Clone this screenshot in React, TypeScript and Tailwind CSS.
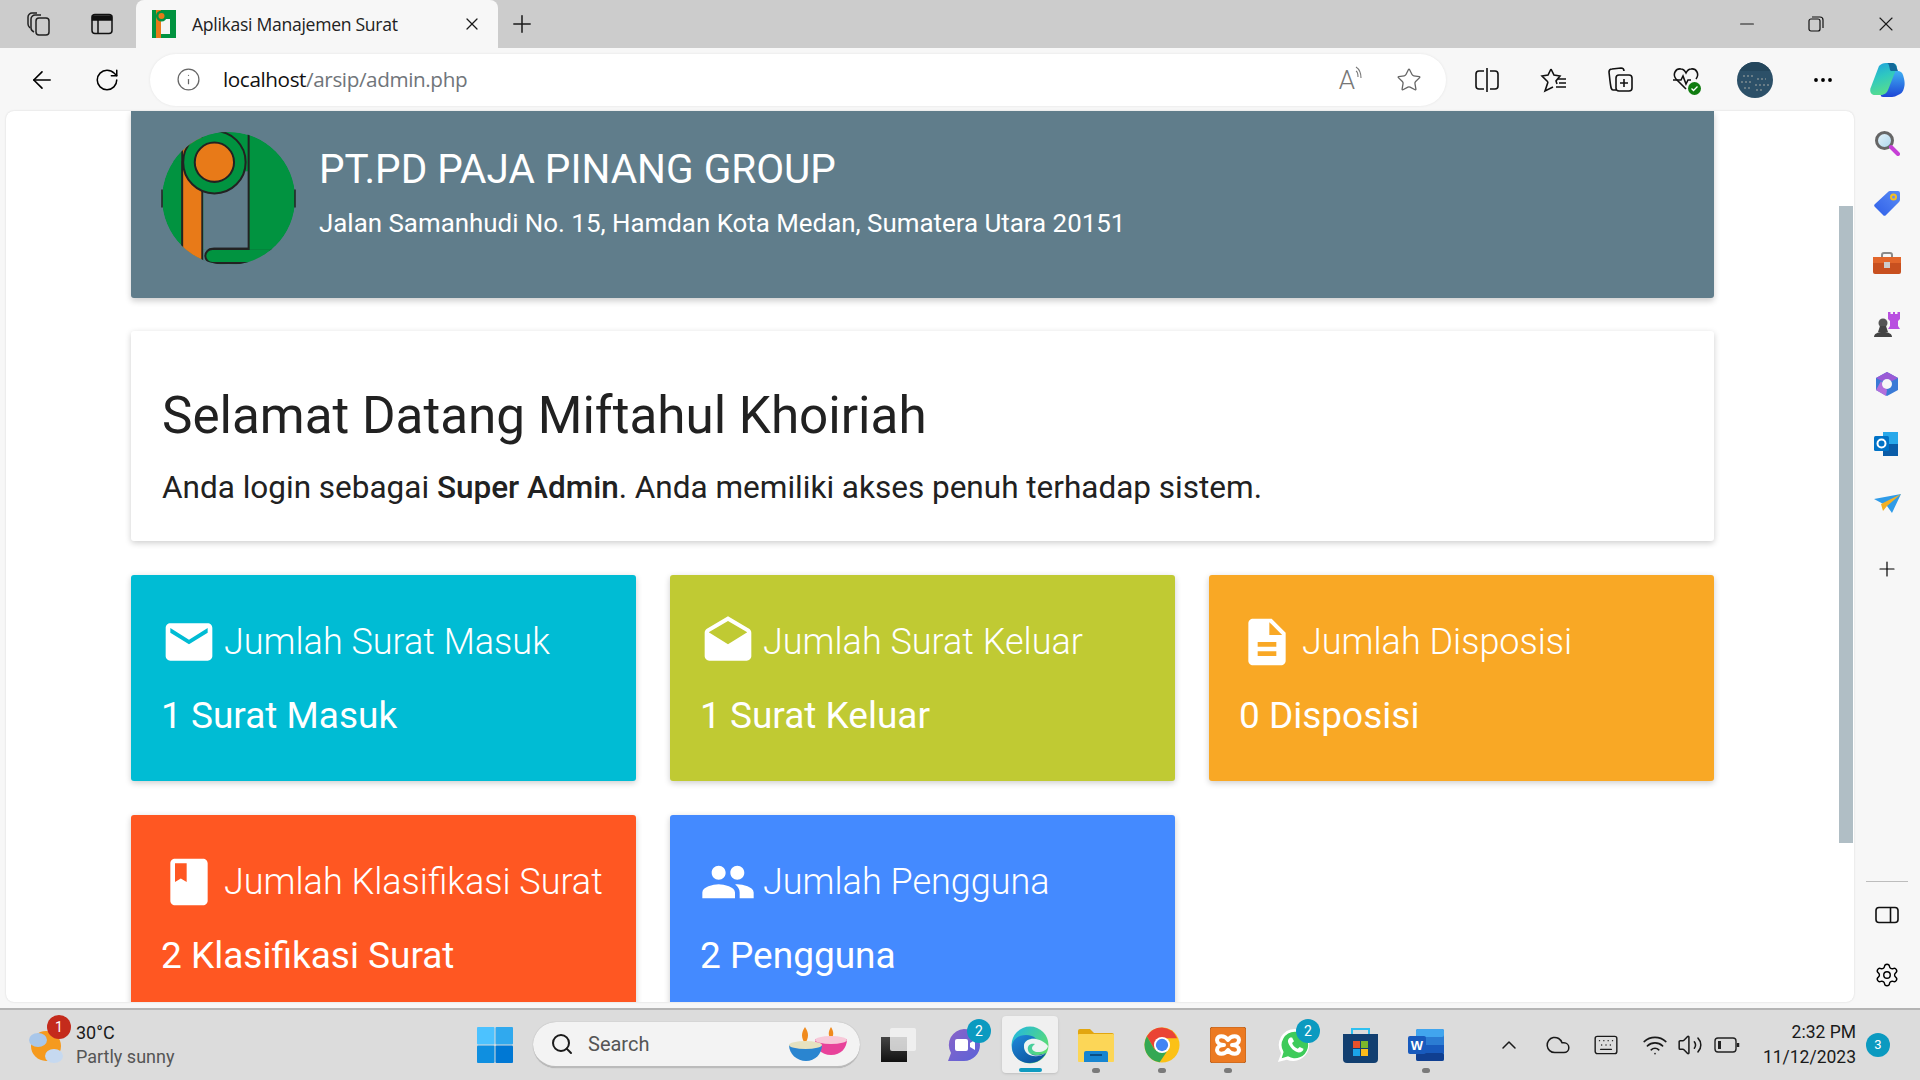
import React from 'react';
import { MdEmail, MdDrafts, MdDescription, MdClass, MdPeople } from 'react-icons/md';
import {
    ArrowLeft, RotateCw, Info, Star, X, Plus, Minus, MoreHorizontal, Settings, Search,
    ChevronUp, Wifi, Volume2, Keyboard, Cloud,
} from 'lucide-react';

const LogoMark = ({ size }: { size: number }) => (
    <svg width={size} height={size} viewBox="0 0 134 134">
        <defs>
            <clipPath id="disc"><circle cx="67" cy="67" r="66" /></clipPath>
        </defs>
        <g clipPath="url(#disc)">
            <circle cx="67" cy="67" r="66" fill="#019340" />
            <rect x="21" y="0" width="20" height="134" fill="#e87a18" stroke="#222" strokeWidth="2" />
            <rect x="0" y="0" width="20" height="30" fill="#019340" />
            <rect x="42" y="40" width="45" height="78" fill="#607d8b" />
            <rect x="42" y="118" width="60" height="16" fill="#607d8b" />
            <rect x="44" y="117" width="70" height="14" rx="7" fill="#019340" stroke="#222" strokeWidth="2" />
            <rect x="87" y="0" width="50" height="118" fill="#019340" />
            <path d="M87 0 V117 H52" fill="none" stroke="#222" strokeWidth="2" />
            <circle cx="53" cy="31" r="31" fill="#019340" stroke="#222" strokeWidth="2" />
            <circle cx="53" cy="31" r="19.500" fill="#e87a18" stroke="#222" strokeWidth="2" />
        </g>
        <path d="M1 58v18M133 58v18" stroke="#222" strokeWidth="1.500" fill="none" />
    </svg>
);

const LogoTab = () => (
    <svg width="24" height="28" viewBox="0 0 24 28">
        <rect width="24" height="28" fill="#019340" />
        <rect x="4" y="0" width="5" height="28" fill="#e87a18" />
        <rect x="9" y="9" width="9" height="15" fill="#f4f4f4" />
        <circle cx="9.500" cy="6" r="5.500" fill="#019340" />
        <circle cx="9.500" cy="6" r="3" fill="#e87a18" />
    </svg>
);

const CopilotLogo = () => (
    <svg width="35" height="34" viewBox="0 0 35 34">
        <defs>
            <linearGradient id="copA" x1="0" y1="0" x2="0.300" y2="1">
                <stop offset="0" stopColor="#1f9fe0" />
                <stop offset="0.500" stopColor="#2fc8c0" />
                <stop offset="1" stopColor="#55dc90" />
            </linearGradient>
            <linearGradient id="copB" x1="0.500" y1="0" x2="0.500" y2="1">
                <stop offset="0" stopColor="#3fb0f2" />
                <stop offset="1" stopColor="#1d45d6" />
            </linearGradient>
        </defs>
        <path d="M21 8h7c2 0 4 1 5 4 2 6 2 10 1 13-1 4-3 6-6 7-2 1-4 2-6 2h-9c-3 0-3-3 0-3 3-1 4-4 5-7z" fill="url(#copB)" />
        <path d="M9 3c2-2 4-3 7-3h6c3 0 4 1 5 4L18 27c-1 3-4 5-8 5H5c-4 0-6-4-4-8z" fill="url(#copA)" />
        <path d="M17 0h5c3 0 4 2 6 8h-7c-2-1-1-7-4-8z" fill="#136a9a" />
    </svg>
);

const EdgeLogo = () => (
    <svg width="38" height="38" viewBox="0 0 38 38">
        <defs>
            <linearGradient id="edgeA" x1="0" y1="0" x2="1" y2="0.700">
                <stop offset="0" stopColor="#1eb4e8" />
                <stop offset="1" stopColor="#5fe06a" />
            </linearGradient>
            <linearGradient id="edgeB" x1="0" y1="0" x2="0.800" y2="1">
                <stop offset="0" stopColor="#1f8bdc" />
                <stop offset="1" stopColor="#0b4f9a" />
            </linearGradient>
        </defs>
        <circle cx="19" cy="19" r="18.500" fill="url(#edgeA)" />
        <path d="M1 21c0-8 7-12 14-12 4 0 8 1 10 4-4-1-11 0-12 6-1 8 9 13 22 8-3 6-9 10-16 10C9 37 1 30 1 21z" fill="url(#edgeB)" />
        <path d="M13 19c1-5 7-7 12-6 5 1 10 4 12 7-1 4-5 6-10 6-4 0-6-2-6-4 0-2 2-3 3-4-5-1-8 2-7 6 1 5 9 8 18 3-8 6-23 4-22-8z" fill="#eef3f3" />
    </svg>
);

const ChromeLogo = () => (
    <svg width="36" height="36" viewBox="0 0 38 38">
        <circle cx="19" cy="19" r="18.500" fill="#fbc116" />
        <path d="M19 .5A18.500 18.500 0 0 0 3 9.700L11 23.500 19 12h16A18.500 18.500 0 0 0 19 .5z" fill="#ea4335" />
        <path d="M3 9.700A18.500 18.500 0 0 0 16.500 37.300L24 26l-13-2.500z" fill="#34a853" />
        <circle cx="19" cy="19" r="8.500" fill="#fff" />
        <circle cx="19" cy="19" r="6.500" fill="#4285f4" />
    </svg>
);

const XamppLogo = () => (
    <svg width="36" height="36" viewBox="0 0 36 36">
        <rect width="36" height="36" rx="3" fill="#ec7a22" stroke="#b9611f" />
        <path d="M18 13c-3-5-11-5-11 0 0 3 3 5 7 5-4 0-7 2-7 5 0 5 8 5 11 0 3 5 11 5 11 0 0-3-3-5-7-5 4 0 7-2 7-5 0-5-8-5-11 0z" fill="none" stroke="#fff" strokeWidth="4" strokeLinejoin="round" />
    </svg>
);

const WhatsappLogo = () => (
    <svg width="36" height="36" viewBox="0 0 38 38">
        <path d="M20 2A17 17 0 0 0 5.500 27.800L2 37l9.500-2.400A17 17 0 1 0 20 2z" fill="#fff" />
        <path d="M20 5A14 14 0 0 0 8 26.300L6 33l6.700-2A14 14 0 1 0 20 5z" fill="#3ecb5a" />
        <path d="M15 11c-2 1-3 3-2 6 2 5 6 9 11 10 3 0 5-2 5-4l-4-2-2 2c-3-1-5-3-6-6l2-2-2-4z" fill="#fff" />
    </svg>
);

const StoreLogo = () => (
    <svg width="35" height="36" viewBox="0 0 35 36">
        <path d="M9 7V2h17v5" fill="none" stroke="#2fc0f0" strokeWidth="2" />
        <path d="M0 7h35v25a4 4 0 0 1-4 4H4a4 4 0 0 1-4-4z" fill="#123f70" />
        <rect x="10" y="14" width="7" height="7" fill="#e8512b" />
        <rect x="18" y="14" width="7" height="7" fill="#7cb72a" />
        <rect x="10" y="22" width="7" height="7" fill="#1ba4e8" />
        <rect x="18" y="22" width="7" height="7" fill="#fbbb1b" />
    </svg>
);

const WordLogo = () => (
    <svg width="36" height="32" viewBox="0 0 36 32">
        <rect x="8" width="28" height="32" rx="2" fill="#2b7cd3" />
        <rect x="8" width="28" height="8" rx="2" fill="#41a5ee" />
        <rect x="8" y="16" width="28" height="8" fill="#185abd" />
        <rect x="8" y="24" width="28" height="8" rx="2" fill="#103f91" />
        <rect y="7" width="18" height="18" rx="2" fill="#185abd" />
        <text x="9" y="21" textAnchor="middle" fontSize="13" fontWeight="700" fill="#fff" fontFamily="Liberation Sans, sans-serif">W</text>
    </svg>
);

const FolderLogo = () => (
    <svg width="36" height="33" viewBox="0 0 36 33">
        <path d="M0 2a2 2 0 0 1 2-2h10l4 4h18a2 2 0 0 1 2 2v6H0z" fill="#e2a60f" />
        <rect y="5" width="36" height="28" rx="1" fill="#fcd657" />
        <path d="M6 33V24a2 2 0 0 1 2-2h20a2 2 0 0 1 2 2v9z" fill="#1785d1" />
        <rect x="12" y="25" width="12" height="2" fill="#0b4f86" />
    </svg>
);

const TeamsLogo = () => (
    <svg width="34" height="34" viewBox="0 0 34 34">
        <defs>
            <linearGradient id="teamsA" x1="0" y1="0" x2="1" y2="1">
                <stop offset="0" stopColor="#8a63c8" />
                <stop offset="1" stopColor="#5b63d8" />
            </linearGradient>
        </defs>
        <path d="M17 1a16 16 0 0 1 0 32H1l3-8A16 16 0 0 1 17 1z" fill="url(#teamsA)" />
        <rect x="8" y="11" width="13" height="12" rx="2" fill="#fff" />
        <path d="M23 15l5-3v10l-5-3z" fill="#fff" />
    </svg>
);

const DiyaLogo = () => (
    <svg width="58" height="34" viewBox="0 0 58 34">
        <path d="M16 0c4 6 4 10 0 17-4-7-4-11 0-17z" fill="#f08a1d" />
        <path d="M42 0c3 5 3 8 0 13-3-5-3-8 0-13z" fill="#f08a1d" />
        <path d="M26 12h32c0 9-6 16-16 16S26 21 26 12z" fill="#e8429a" />
        <ellipse cx="42" cy="13" rx="16" ry="4" fill="#f7c9d9" />
        <path d="M0 18h33c0 9-7 16-16 16S0 27 0 18z" fill="#2a85d0" />
        <ellipse cx="16.500" cy="18" rx="16.500" ry="4" fill="#e6e2c0" />
    </svg>
);

const Badge = ({ value, className }: { value: string; className: string }) => (
    <span className={`absolute flex h-[24px] w-[24px] items-center justify-center rounded-full text-[14px] text-white ${className}`}>{value}</span>
);

const Slot = ({ children, dot, active, badge }: { children: React.ReactNode; dot?: boolean; active?: boolean; badge?: React.ReactNode }) => (
    <div className="relative flex h-[66px] w-[66px] items-center justify-center">
        {active && <span className="absolute left-[5px] top-[4px] h-[57px] w-[56px] rounded bg-[#f0f0f0] shadow-sm" />}
        <span className="relative flex">{children}</span>
        {badge}
        {dot && <span className="absolute bottom-[5px] h-[5px] w-[8px] rounded-full bg-[#7a7a7a]" />}
        {active && <span className="absolute bottom-[6px] h-[4px] w-[23px] rounded-full bg-[#0f9bc0]" />}
    </div>
);

const SideIcon = ({ children }: { children: React.ReactNode }) => (
    <div className="flex h-[60.2px] items-center justify-center">{children}</div>
);

interface StatCard {
    title: string;
    value: string;
    color: string;
    icon: React.ReactNode;
}

const cards: StatCard[] = [
    { title: 'Jumlah Surat Masuk', value: '1 Surat Masuk', color: 'bg-[#00bcd4]', icon: <MdEmail size={56} /> },
    { title: 'Jumlah Surat Keluar', value: '1 Surat Keluar', color: 'bg-[#c0ca33]', icon: <MdDrafts size={56} /> },
    { title: 'Jumlah Disposisi', value: '0 Disposisi', color: 'bg-[#f9a825]', icon: <MdDescription size={56} /> },
    { title: 'Jumlah Klasifikasi Surat', value: '2 Klasifikasi Surat', color: 'bg-[#ff5722]', icon: <MdClass size={56} /> },
    { title: 'Jumlah Pengguna', value: '2 Pengguna', color: 'bg-[#448aff]', icon: <MdPeople size={56} /> },
];

const App = () => {
    return (
        <div className="flex h-[1080px] w-[1920px] flex-col overflow-hidden bg-[#f7f7f7] font-['Roboto',sans-serif]">
            {/* tab strip */}
            <div className="flex h-[48px] shrink-0 items-center bg-[#cccccc] text-[#1a1a1a]">
                <div className="flex w-[136px] items-center pl-[26px]">
                    <svg width="26" height="26" viewBox="0 0 26 26" fill="none" stroke="#222" strokeWidth="1.500">
                        <rect x="10" y="7" width="13" height="17" rx="3" />
                        <path d="M8 21c-2-1-3-2-3-4V8c0-2 2-4 4-4h6" />
                        <path d="M4 17c-1-1-2-2-2-4V6c0-2 2-4 4-4h5" />
                    </svg>
                    <svg className="ml-[38px]" width="24" height="24" viewBox="0 0 24 24" fill="none" stroke="#111" strokeWidth="1.500">
                        <rect x="2" y="2.500" width="20" height="19" rx="3" />
                        <path d="M2.500 4h19v4h-19z" fill="#111" />
                        <path d="M8 8v13" />
                    </svg>
                </div>
                <div className="flex h-[48px] w-[362px] items-center self-end rounded-t-lg bg-[#f7f7f7] pl-[16px] pr-[16px]">
                    <LogoTab />
                    <span className="ml-[16px] flex-1 font-['Open_Sans',sans-serif] text-[17.6px] tracking-[-0.3px] text-[#222]">Aplikasi Manajemen Surat</span>
                    <X size={20} strokeWidth={1.500} />
                </div>
                <Plus className="ml-[10px]" size={28} strokeWidth={1.300} />
                <div className="ml-auto flex items-center gap-[49px] pr-[22px]">
                    <Minus size={22} strokeWidth={1.200} />
                    <svg width="18" height="18" viewBox="0 0 18 18" fill="none" stroke="#111" strokeWidth="1.200">
                        <rect x="2" y="4" width="11" height="12" rx="2" />
                        <path d="M5 2h8a3 3 0 0 1 3 3v8" />
                    </svg>
                    <X size={24} strokeWidth={1.100} />
                </div>
            </div>

            {/* address bar row */}
            <div className="flex h-[63px] shrink-0 items-center bg-[#f7f7f7]">
                <ArrowLeft className="ml-[28px]" size={28} strokeWidth={1.400} />
                <RotateCw className="ml-[38px]" size={26} strokeWidth={1.400} />
                <div className="ml-[30px] flex h-[52px] w-[1296px] items-center rounded-full bg-white pl-[26px] pr-[24px] shadow-[0_0_3px_rgba(0,0,0,0.08)]">
                    <Info size={25} strokeWidth={1.200} color="#666" />
                    <span className="ml-[22px] flex-1 font-['Open_Sans',sans-serif] text-[20.7px] tracking-[-0.4px] text-[#111]">
                        localhost<span className="text-[#70757a]">/arsip/admin.php</span>
                    </span>
                    <span className="flex items-start text-[26px] font-light leading-[30px] text-[#777]">
                        A
                        <svg className="mt-[1px]" width="9" height="14" viewBox="0 0 9 14" fill="none" stroke="#777" strokeWidth="1.100">
                            <path d="M1 1c3 2 5 5 5 11M1 5c2 1 2 3 2 6" />
                        </svg>
                    </span>
                    <Star className="ml-[32px]" size={26} strokeWidth={1.200} color="#666" />
                </div>
                <svg className="ml-[28px]" width="26" height="26" viewBox="0 0 26 26" fill="none" stroke="#111" strokeWidth="1.600">
                    <path d="M13 1v24" />
                    <path d="M10 4H5a3 3 0 0 0-3 3v12a3 3 0 0 0 3 3h5M16 4h5a3 3 0 0 1 3 3v12a3 3 0 0 1-3 3h-5" />
                </svg>
                <svg className="ml-[40px]" width="28" height="28" viewBox="0 0 28 28" fill="none" stroke="#111" strokeWidth="1.600">
                    <path d="M11 3l3 6 6 1-4 5 1 3M8 16l-3 9 8-4" />
                    <path d="M11 3L8 9l-6 1 6 6" />
                    <path d="M18 13h8M19 17h7M16 21h10" />
                </svg>
                <svg className="ml-[39px]" width="27" height="28" viewBox="0 0 27 28" fill="none" stroke="#111" strokeWidth="1.600">
                    <path d="M9 24H6c-2 0-2-2-3-9L2 6c0-2 1-3 3-3l9-1c2 0 3 1 3 3" />
                    <rect x="9" y="9" width="16" height="16" rx="3" />
                    <path d="M17 13v8M13 17h8" />
                </svg>
                <div className="relative ml-[38px] h-[28px] w-[28px]">
                    <svg width="28" height="28" viewBox="0 0 28 28" fill="none" stroke="#111" strokeWidth="1.600">
                        <path d="M14 23L4 13C0 8 4 2 9 3c2 0 4 2 5 4 1-2 3-4 5-4 5-1 9 5 5 10" />
                        <path d="M1 14h8l2-4 3 8 2-4h3" />
                    </svg>
                    <svg className="absolute bottom-[-1px] right-[-1px]" width="13" height="13" viewBox="0 0 13 13">
                        <circle cx="6.500" cy="6.500" r="6.500" fill="#107c10" />
                        <path d="M3.500 6.500l2 2 4-4" fill="none" stroke="#fff" strokeWidth="1.300" />
                    </svg>
                </div>
                <svg className="ml-[37px]" width="36" height="36" viewBox="0 0 36 36">
                    <defs>
                        <clipPath id="avatarClip"><circle cx="18" cy="18" r="18" /></clipPath>
                    </defs>
                    <g clipPath="url(#avatarClip)">
                        <rect width="36" height="36" fill="#2c5068" />
                        <rect width="36" height="9" fill="#24465c" />
                        <path d="M6 14h10M20 17h9M4 20h12M18 23h14M7 26h8M19 28h8" stroke="#7c8a90" strokeWidth="1.500" strokeDasharray="2 2" />
                    </g>
                </svg>
                <MoreHorizontal className="ml-[38px]" size={24} strokeWidth={1.800} />
                <span className="ml-[35px] flex"><CopilotLogo /></span>
            </div>

            {/* page + edge sidebar */}
            <div className="flex min-h-0 flex-1">
                <div className="ml-[6px] flex min-w-0 flex-1 overflow-hidden rounded-lg bg-white shadow-[0_0_2px_rgba(0,0,0,0.15)]">
                    <div className="min-w-0 flex-1 pl-[125px]">
                        <div className="flex h-[187px] w-[1583px] items-start rounded-b-[3px] bg-[#607d8b] pl-[30px] pt-[20px] text-white shadow-[0_3px_6px_rgba(0,0,0,0.2)]">
                            <LogoMark size={135} />
                            <div className="ml-[23px]">
                                <div className="mt-[14px] text-[40.5px] leading-[48px]">PT.PD PAJA PINANG GROUP</div>
                                <div className="mt-[14px] text-[25.9px] leading-[32px]">Jalan Samanhudi No. 15, Hamdan Kota Medan, Sumatera Utara 20151</div>
                            </div>
                        </div>

                        <div className="mt-[33px] h-[210px] w-[1583px] rounded-[3px] bg-white px-[31px] pt-[55px] text-[#212121] shadow-[0_2px_6px_rgba(0,0,0,0.2)]">
                            <div className="text-[51.2px] leading-[60px]">Selamat Datang Miftahul Khoiriah</div>
                            <div className="mt-[21px] text-[31.5px] leading-[42px]">Anda login sebagai <b className="font-medium">Super Admin</b>. Anda memiliki akses penuh terhadap sistem.</div>
                        </div>

                        <div className="mt-[34px] grid w-[1583px] grid-cols-3 gap-[34px]">
                            {cards.map((card) => (
                                <div key={card.title} className={`h-[206px] rounded-[3px] px-[30px] pt-[39px] text-white shadow-[0_2px_6px_rgba(0,0,0,0.2)] ${card.color}`}>
                                    <div className="flex h-[56px] items-center">
                                        <span className="flex w-[63px] shrink-0 justify-start">{card.icon}</span>
                                        <span className="text-[36px] font-light leading-[44px]">{card.title}</span>
                                    </div>
                                    <div className="mt-[24px] text-[37px] leading-[44px]">{card.value}</div>
                                </div>
                            ))}
                        </div>
                    </div>
                    <div className="w-[15px] shrink-0 pt-[95px]">
                        <div className="h-[637px] w-[14px] bg-[#b0bec5]" />
                    </div>
                </div>

                <div className="flex w-[66px] shrink-0 flex-col items-center pt-[2px]">
                    <SideIcon>
                        <svg width="26" height="26" viewBox="0 0 26 26">
                            <defs>
                                <linearGradient id="lens" x1="0" y1="0" x2="1" y2="1">
                                    <stop offset="0" stopColor="#e8f4fa" />
                                    <stop offset="1" stopColor="#a8d4ec" />
                                </linearGradient>
                            </defs>
                            <circle cx="10.500" cy="10.500" r="8" fill="url(#lens)" stroke="#666" strokeWidth="3" />
                            <path d="M17 17l7 7" stroke="#c63fd6" strokeWidth="4" strokeLinecap="round" />
                        </svg>
                    </SideIcon>
                    <SideIcon>
                        <svg width="26" height="26" viewBox="0 0 26 26">
                            <defs>
                                <linearGradient id="tag" x1="0" y1="1" x2="1" y2="0">
                                    <stop offset="0" stopColor="#2f5fe8" />
                                    <stop offset="1" stopColor="#5a8cf5" />
                                </linearGradient>
                            </defs>
                            <path d="M1 14L14 2a3 3 0 0 1 2-1h8a2 2 0 0 1 2 2v7a3 3 0 0 1-1 2L12 25a2 2 0 0 1-3 0L1 17a2 2 0 0 1 0-3z" fill="url(#tag)" />
                            <circle cx="19.500" cy="7" r="2.500" fill="#6f8cf0" stroke="#f4c020" strokeWidth="2" />
                        </svg>
                    </SideIcon>
                    <SideIcon>
                        <svg width="28" height="22" viewBox="0 0 28 22">
                            <path d="M9 6V3a2 2 0 0 1 2-2h6a2 2 0 0 1 2 2v3" fill="none" stroke="#8a8a8a" strokeWidth="2" />
                            <rect y="5" width="28" height="17" rx="2" fill="#c8501f" />
                            <rect y="5" width="28" height="6" fill="#e2662b" />
                            <rect x="11" y="10" width="6" height="6" fill="#ccc" />
                        </svg>
                    </SideIcon>
                    <SideIcon>
                        <svg width="28" height="28" viewBox="0 0 28 28">
                            <circle cx="10" cy="13" r="4.500" fill="#555" />
                            <path d="M7 16h6l2 6H5zM1 27c0-3 3-5 9-5s9 2 9 5z" fill="#444" />
                            <path d="M15 2h2.500v2h2.500V2h2v2h2.500V2H27v7l-2 2v5l2 3H15l2-3v-5l-2-2z" fill="#b84fe0" />
                        </svg>
                    </SideIcon>
                    <SideIcon>
                        <svg width="26" height="26" viewBox="0 0 26 26">
                            <path d="M13 1l11 6v12l-11 6-11-6V7z" fill="#3a7ad6" />
                            <path d="M2 7l11-6 11 6-6 3-5-2-5 2z" fill="#9a5bd6" />
                            <path d="M2 19l5-9 6 9-1 6z" fill="#b26fdc" />
                            <circle cx="13" cy="13" r="5" fill="#f7f7f7" />
                        </svg>
                    </SideIcon>
                    <SideIcon>
                        <svg width="26" height="26" viewBox="0 0 26 26">
                            <path d="M9 1h15v24H9z" fill="#28a8ea" />
                            <path d="M9 13h15v12H9z" fill="#0a5ca8" />
                            <rect y="5" width="15" height="15" rx="1.500" fill="#0072c6" />
                            <circle cx="7.500" cy="12.500" r="4" fill="none" stroke="#fff" strokeWidth="2" />
                        </svg>
                    </SideIcon>
                    <SideIcon>
                        <svg width="28" height="22" viewBox="0 0 28 22">
                            <path d="M1 6l27-5-9 19-5-7z" fill="#2f9be8" />
                            <path d="M28 1L8 11l2 7 4-5z" fill="#f4b023" />
                        </svg>
                    </SideIcon>
                    <div className="mt-[5px]">
                        <SideIcon><Plus size={24} strokeWidth={1.200} /></SideIcon>
                    </div>
                    <div className="mt-auto w-[42px] border-t border-[#bdbdbd]" />
                    <div className="flex h-[66px] items-center justify-center">
                        <svg width="24" height="18" viewBox="0 0 24 18" fill="none" stroke="#111" strokeWidth="1.600">
                            <rect x="1" y="1.500" width="22" height="15" rx="3" />
                            <path d="M15.500 1.500v15" />
                        </svg>
                    </div>
                    <div className="flex h-[54px] items-center justify-center"><Settings size={26} strokeWidth={1.300} /></div>
                </div>
            </div>

            {/* windows taskbar */}
            <div className="mt-[6px] flex h-[72px] shrink-0 items-center border-t-[2px] border-[#b4b4b4] bg-[#dcdcdc] text-[#1a1a1a]">
                <div className="relative ml-[28px] flex w-[449px] items-center">
                    <svg width="36" height="42" viewBox="0 0 36 42">
                        <circle cx="18" cy="22" r="15" fill="#f59a1e" />
                        <ellipse cx="10" cy="16" rx="9" ry="7" fill="#a9c7ea" />
                        <ellipse cx="26" cy="32" rx="9" ry="7" fill="#c6d9f0" />
                    </svg>
                    <Badge value="1" className="left-[19px] top-[-6px] bg-[#c42b1c]" />
                    <div className="ml-[12px] text-[18px] leading-[24px]">
                        <div>30°C</div>
                        <div className="text-[#555]">Partly sunny</div>
                    </div>
                </div>
                <svg width="36" height="36" viewBox="0 0 36 36">
                    <rect width="17.500" height="17.500" rx="1" fill="#4cc2ff" />
                    <rect x="18.500" width="17.500" height="17.500" rx="1" fill="#30a9ee" />
                    <rect y="18.500" width="17.500" height="17.500" rx="1" fill="#0f8fe0" />
                    <rect x="18.500" y="18.500" width="17.500" height="17.500" rx="1" fill="#0078d4" />
                </svg>
                <div className="ml-[20px] flex h-[46px] w-[327px] items-center rounded-full border-b-2 border-[#bbbbbb] bg-[#f3f3f3] pl-[17px] pr-[13px] shadow-[0_0_1px_rgba(0,0,0,0.3)]">
                    <Search size={24} strokeWidth={2} />
                    <span className="ml-[14px] flex-1 text-[20px] text-[#555]">Search</span>
                    <DiyaLogo />
                </div>
                <div className="ml-[5px] flex items-center">
                    <Slot>
                        <div className="relative h-[34px] w-[35px]">
                            <div className="absolute bottom-0 left-0 h-[25px] w-[26px] bg-[linear-gradient(180deg,#444,#111)]" />
                            <div className="absolute right-0 top-0 h-[23px] w-[26px] rounded-[2px] bg-[#f4f4f4]/80" />
                        </div>
                    </Slot>
                    <Slot badge={<Badge value="2" className="right-[6px] top-[7px] bg-[#0b9ac0]" />}>
                        <TeamsLogo />
                    </Slot>
                    <Slot active><EdgeLogo /></Slot>
                    <Slot dot><FolderLogo /></Slot>
                    <Slot dot><ChromeLogo /></Slot>
                    <Slot dot><XamppLogo /></Slot>
                    <Slot badge={<Badge value="2" className="right-[7px] top-[7px] bg-[#0b9ac0]" />}>
                        <WhatsappLogo />
                    </Slot>
                    <Slot><StoreLogo /></Slot>
                    <Slot dot><WordLogo /></Slot>
                </div>
                <div className="ml-[38px] flex items-center">
                    <ChevronUp size={24} strokeWidth={1.500} />
                    <Cloud className="ml-[24px]" size={26} strokeWidth={1.400} />
                    <Keyboard className="ml-[22px]" size={26} strokeWidth={1.300} />
                    <Wifi className="ml-[23px]" size={26} strokeWidth={1.500} />
                    <Volume2 className="ml-[9px]" size={26} strokeWidth={1.400} />
                    <svg className="ml-[11px]" width="26" height="18" viewBox="0 0 26 18" fill="none" stroke="#222" strokeWidth="1.400">
                        <rect x="1" y="2" width="21" height="14" rx="3" />
                        <rect x="4" y="5" width="3" height="8" fill="#222" stroke="none" />
                        <path d="M24 7v4" strokeWidth="2.500" />
                    </svg>
                </div>
                <div className="ml-auto flex items-center pr-[30px]">
                    <div className="text-right text-[17.5px] leading-[25px]">
                        <div>2:32 PM</div>
                        <div>11/12/2023</div>
                    </div>
                    <span className="ml-[10px] flex h-[24px] w-[24px] items-center justify-center rounded-full bg-[#0b9ac0] text-[13px] text-white">3</span>
                </div>
            </div>
        </div>
    );
};

export default App;
